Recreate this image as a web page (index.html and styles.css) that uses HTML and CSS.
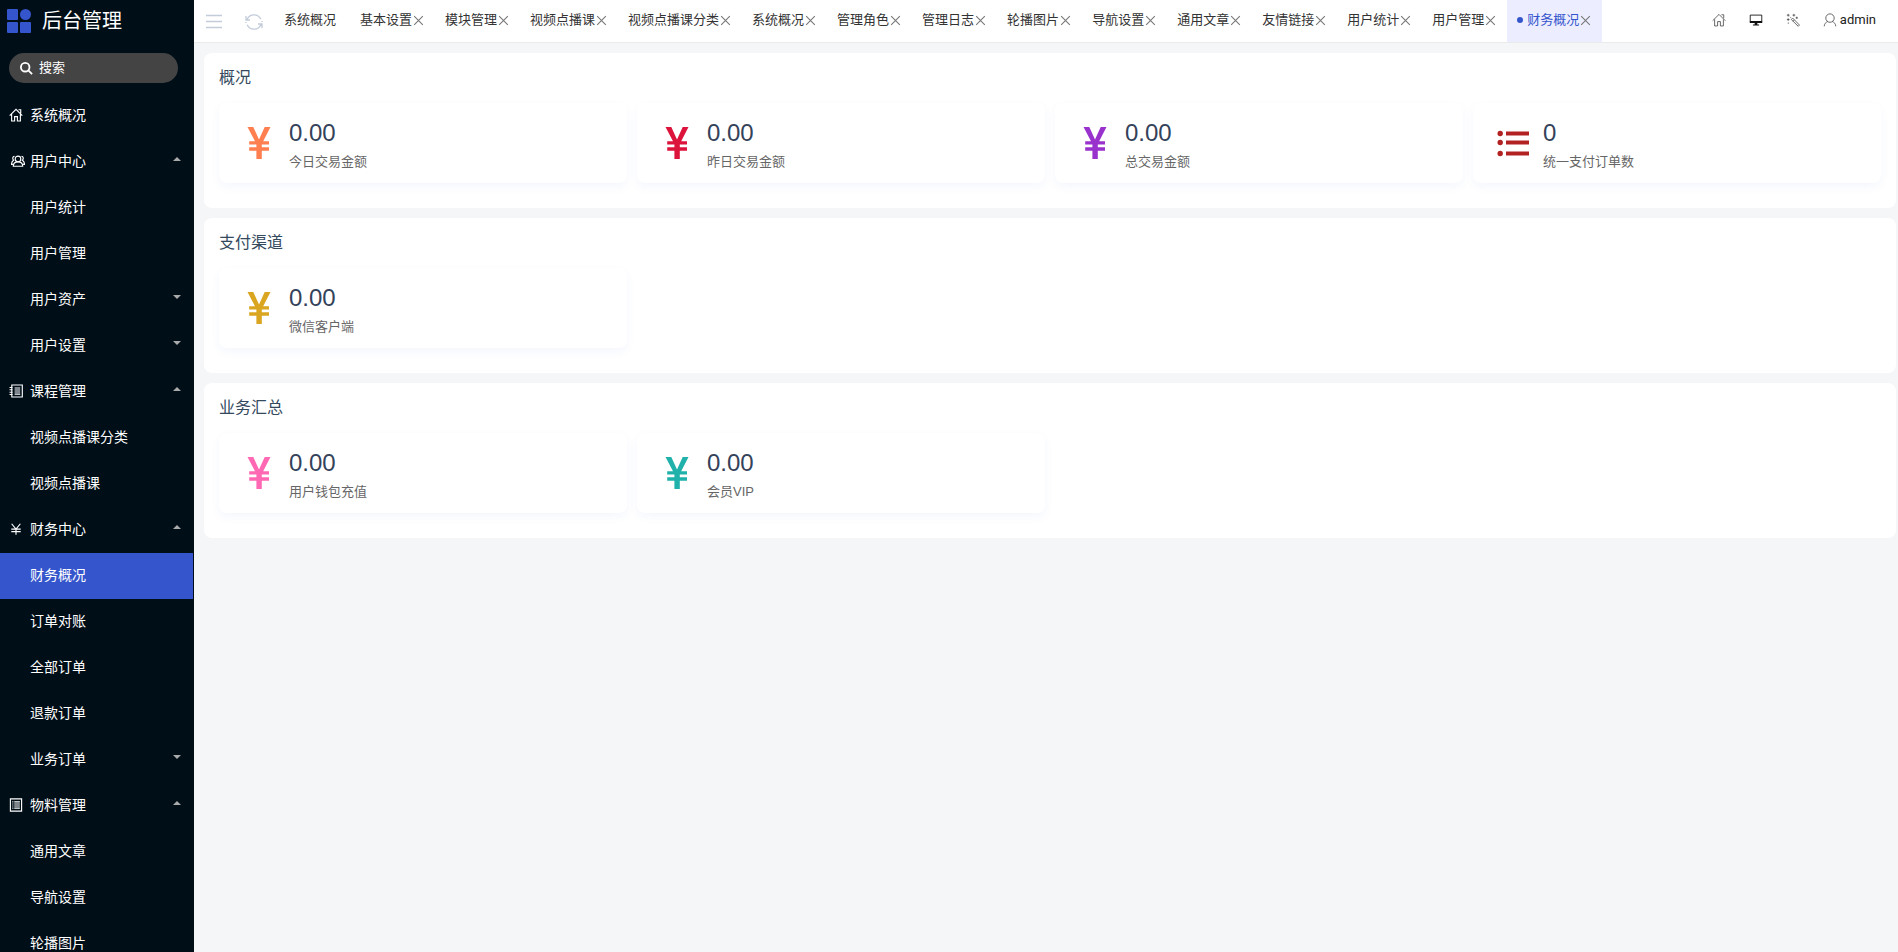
FILE: index.html
```html
<!DOCTYPE html>
<html lang="zh-CN">
<head>
<meta charset="utf-8">
<title>后台管理</title>
<link rel="stylesheet" href="styles.css">
</head>
<body>
<svg class="sprite" aria-hidden="true">
  <symbol id="i-home" viewBox="0 0 16 16"><path d="M.8 8.800 8 1.600l7.200 7.200M3 7.200v7.600h3.400V9.800h3.200v5H13V7.200M10.800 2h2.600v4"/></symbol>
  <symbol id="i-users" viewBox="0 0 16 16"><circle cx="8" cy="5.6" r="3.2"/><path d="M2.6 14c0-3 2-5 5.4-5s5.400 2 5.400 5zM4 2.800C2 2.600 1.200 5.200 3 7.200 1.600 8 .6 9.400.6 11.800h1.600M12 2.800c2-.2 2.800 2.400 1 4.400 1.400.8 2.400 2.200 2.400 4.600h-1.600"/></symbol>
  <symbol id="i-book" viewBox="0 0 16 16"><path d="M3.200 1.200h12v13.600h-12zM.6 4h3.600M.6 6.600h3.600M.6 9.400h3.600M.6 12h3.600M6.400 4.600h6.400M6.400 6.900h6.400M6.400 9.200h6.400M6.400 11.500h6.400"/></symbol>
  <symbol id="i-yen" viewBox="0 0 16 16"><path d="M3 2l5 6 5-6M8 8v6.600M2.600 8.200h10.800M2.600 11h10.800"/></symbol>
  <symbol id="i-list" viewBox="0 0 16 16"><path d="M1.600 1h12.800v14H1.600zM6 4.400h6.400M6 6.800h6.400M6 9.200h6.400M6 11.600h6.400M3.800 4.400H5M3.800 6.800H5M3.800 9.200H5M3.800 11.600H5"/></symbol>
  <symbol id="i-close" viewBox="0 0 12 12"><path d="M2 2l8 8M10 2l-8 8"/></symbol>
  <symbol id="b-yen" viewBox="0 0 32 32"><path class="solid" d="M4.500 0h5.800L16 12.500 21.700 0h5.800L20.200 14.200H26v3.400h-7.200v2.600H26v3.600h-7.200V32h-5.400v-8.200H6.200v-3.600h7.200v-2.600H6.200v-3.400H12z"/></symbol>
  <symbol id="b-list" viewBox="0 0 32 32"><path class="solid" d="M9 4.500h23v4H9zM9 13.500h23v4H9zM9 24.500h23v4H9z"/><circle class="solid" cx="3.200" cy="6.500" r="2.700"/><circle class="solid" cx="3.200" cy="15.500" r="2.700"/><circle class="solid" cx="3.200" cy="26.500" r="2.700"/></symbol>
</svg>
<div class="app">
  <aside class="sidebar">
    <div class="brand">
      <svg class="logo" viewBox="0 0 24 24"><rect width="11" height="11" rx="1"/><circle cx="18.500" cy="5.500" r="5.500"/><rect y="13" width="11" height="11" rx="1"/><rect x="13" y="13" width="11" height="11" rx="1"/></svg>
      <span>后台管理</span>
    </div>
    <label class="search">
      <svg class="search-icon" viewBox="0 0 14 14"><circle cx="5.600" cy="5.600" r="4.600"/><path d="M9 9l4 4"/></svg>
      <input type="text" placeholder="搜索" aria-label="搜索">
    </label>
    <nav class="menu">
      <a href="#"><svg class="icon"><use href="#i-home"/></svg>系统概况</a>
      <a href="#" class="up"><svg class="icon shift"><use href="#i-users"/></svg>用户中心</a>
      <a href="#">用户统计</a>
      <a href="#">用户管理</a>
      <a href="#" class="down">用户资产</a>
      <a href="#" class="down">用户设置</a>
      <a href="#" class="up"><svg class="icon"><use href="#i-book"/></svg>课程管理</a>
      <a href="#">视频点播课分类</a>
      <a href="#">视频点播课</a>
      <a href="#" class="up"><svg class="icon"><use href="#i-yen"/></svg>财务中心</a>
      <a href="#" class="active">财务概况</a>
      <a href="#">订单对账</a>
      <a href="#">全部订单</a>
      <a href="#">退款订单</a>
      <a href="#" class="down">业务订单</a>
      <a href="#" class="up"><svg class="icon"><use href="#i-list"/></svg>物料管理</a>
      <a href="#">通用文章</a>
      <a href="#">导航设置</a>
      <a href="#">轮播图片</a>
    </nav>
  </aside>
  <div class="main">
    <header class="topbar">
      <button class="tool" aria-label="折叠菜单"><svg viewBox="0 0 18 18"><path d="M1 2.500h16M1 8.500h16M1 14.500h16"/></svg></button>
      <button class="tool" aria-label="刷新"><svg viewBox="0 0 18 18"><path d="M2 6.500A7.500 7.500 0 0 1 15.800 6.200M16 11.500A7.500 7.500 0 0 1 2.200 11.800M1 3v4h4M17 15v-4h-4M1 9v1M17 9V8"/></svg></button>
      <nav class="tabs">
        <div class="tab first"><a href="#">系统概况</a></div>
        <div class="tab"><a href="#">基本设置</a><button aria-label="关闭"><svg><use href="#i-close"/></svg></button></div>
        <div class="tab"><a href="#">模块管理</a><button aria-label="关闭"><svg><use href="#i-close"/></svg></button></div>
        <div class="tab"><a href="#">视频点播课</a><button aria-label="关闭"><svg><use href="#i-close"/></svg></button></div>
        <div class="tab"><a href="#">视频点播课分类</a><button aria-label="关闭"><svg><use href="#i-close"/></svg></button></div>
        <div class="tab"><a href="#">系统概况</a><button aria-label="关闭"><svg><use href="#i-close"/></svg></button></div>
        <div class="tab"><a href="#">管理角色</a><button aria-label="关闭"><svg><use href="#i-close"/></svg></button></div>
        <div class="tab"><a href="#">管理日志</a><button aria-label="关闭"><svg><use href="#i-close"/></svg></button></div>
        <div class="tab"><a href="#">轮播图片</a><button aria-label="关闭"><svg><use href="#i-close"/></svg></button></div>
        <div class="tab"><a href="#">导航设置</a><button aria-label="关闭"><svg><use href="#i-close"/></svg></button></div>
        <div class="tab"><a href="#">通用文章</a><button aria-label="关闭"><svg><use href="#i-close"/></svg></button></div>
        <div class="tab"><a href="#">友情链接</a><button aria-label="关闭"><svg><use href="#i-close"/></svg></button></div>
        <div class="tab"><a href="#">用户统计</a><button aria-label="关闭"><svg><use href="#i-close"/></svg></button></div>
        <div class="tab"><a href="#">用户管理</a><button aria-label="关闭"><svg><use href="#i-close"/></svg></button></div>
        <div class="tab current"><a href="#">财务概况</a><button aria-label="关闭"><svg><use href="#i-close"/></svg></button></div>
      </nav>
      <div class="actions">
        <button aria-label="首页"><svg><use href="#i-home"/></svg></button>
        <button aria-label="全屏"><svg class="dark" viewBox="0 0 16 16"><path d="M1.400 2.400h13.200v8.400H1.400z"/><path class="solid" d="M1 9h14v2.400H1zM6.500 11h3v2h-3zM4.500 13h7v1.400h-7z"/></svg></button>
        <button aria-label="主题"><svg viewBox="0 0 16 16"><path d="M6 7.400 7.600 5.800l7.800 8-1.400 1.400zM8 9.400l1.600-1.600M1 2.500h3M2.500 1v3M7.500 2.500h3M9 1v3M1 7.500h3M2.500 6v3M4.600 4.400l1 1M11 5.500h2.600M12.300 4.200v2.600M2 11.500h1.500"/></svg></button>
        <button><svg viewBox="0 0 16 16"><circle cx="8" cy="5.800" r="4.800"/><path d="M1.400 15.200c.2-2.800 1.600-4.600 4-5.400M14.600 15.200c-.2-2.800-1.600-4.600-4-5.400"/></svg>admin</button>
      </div>
    </header>
    <main class="content">
      <section class="panel">
        <h2>概况</h2>
        <div class="grid">
          <div class="stat"><svg class="coral"><use href="#b-yen"/></svg><div><strong>0.00</strong><span>今日交易金额</span></div></div>
          <div class="stat"><svg class="crimson"><use href="#b-yen"/></svg><div><strong>0.00</strong><span>昨日交易金额</span></div></div>
          <div class="stat"><svg class="orchid"><use href="#b-yen"/></svg><div><strong>0.00</strong><span>总交易金额</span></div></div>
          <div class="stat"><svg class="brick"><use href="#b-list"/></svg><div><strong>0</strong><span>统一支付订单数</span></div></div>
        </div>
      </section>
      <section class="panel">
        <h2>支付渠道</h2>
        <div class="grid">
          <div class="stat"><svg class="gold"><use href="#b-yen"/></svg><div><strong>0.00</strong><span>微信客户端</span></div></div>
        </div>
      </section>
      <section class="panel">
        <h2>业务汇总</h2>
        <div class="grid">
          <div class="stat"><svg class="pink"><use href="#b-yen"/></svg><div><strong>0.00</strong><span>用户钱包充值</span></div></div>
          <div class="stat"><svg class="teal"><use href="#b-yen"/></svg><div><strong>0.00</strong><span>会员VIP</span></div></div>
        </div>
      </section>
    </main>
  </div>
</div>
</body>
</html>
```
FILE: styles.css
```css
* { box-sizing: border-box; }
body {
  margin: 0;
  font: 13px/20px "Liberation Sans", "Noto Sans CJK SC", sans-serif;
  color: #333;
  background: #f5f6f8;
}
a { color: inherit; text-decoration: none; }
button { border: 0; padding: 0; background: none; font: inherit; color: inherit; cursor: pointer; }
svg { fill: none; stroke: currentColor; flex: none; }
.solid { fill: currentColor; stroke: none; }
.sprite { display: none; }
.app { display: flex; height: 100vh; overflow: hidden; }

.sidebar { width: 194px; flex: none; background: #000e18; color: #fff; overflow: hidden; }
.brand { display: flex; align-items: center; gap: 11px; height: 42px; padding-left: 7px; font-size: 20px; }
.logo { width: 24px; height: 24px; fill: #3555cc; stroke: none; }
.search {
  display: flex; align-items: center; gap: 6px;
  height: 30px; margin: 11px 16px 10px 9px; padding: 0 11px;
  border-radius: 15px; background: #444;
}
.search-icon { width: 13px; height: 13px; stroke-width: 2; }
.search input { flex: 1; min-width: 0; border: 0; padding: 0; outline: 0; background: none; color: #fff; font: inherit; }
.search input::placeholder { color: #fff; opacity: 1; }
.menu { margin-right: 1px; font-size: 14px; }
.menu a { position: relative; display: flex; align-items: center; height: 46px; padding: 0 0 2px 30px; }
.menu .active { background: #3555cc; }
.icon { position: absolute; left: 9px; width: 14px; height: 14px; stroke-width: 1.300; }
.icon.shift { left: 11px; }
.up::after, .down::after {
  content: ""; position: absolute; right: 12px; top: 18px;
  border: 4px solid transparent; border-top-width: 0; border-bottom-color: #aaa;
}
.down::after { border-top: 4px solid #aaa; border-bottom: 0; }

.main { flex: 1; min-width: 0; display: flex; flex-direction: column; }
.topbar { display: flex; height: 43px; background: #fff; border-bottom: 1px solid #eaebed; }
.tool { width: 40px; color: #c3ccda; }
.tool svg { width: 18px; height: 18px; vertical-align: middle; stroke-width: 1.300; }
.tabs { display: flex; flex: 1; min-width: 0; margin-left: -4px; overflow: hidden; }
.tab { display: flex; align-items: center; flex: none; padding: 0 10px 2px; }
.tab.first { min-width: 80px; justify-content: center; }
.tab button { display: flex; width: 13px; color: #777; }
.tab svg { width: 13px; height: 13px; }
.current { background: #eceeff; color: #3555cc; }
.current::before { content: ""; width: 6px; height: 6px; margin-right: 4px; border-radius: 50%; background: #3555cc; }
.actions { display: flex; align-items: center; gap: 23px; padding: 0 22px 2px 0; font-family: Roboto, sans-serif; }
.actions button { display: flex; align-items: center; gap: 3px; color: #222; }
.actions svg { width: 14px; height: 14px; color: #555; }
.actions .dark { color: #111; }

.content { padding: 10px 2px 10px 10px; display: flex; flex-direction: column; gap: 10px; }
.panel { padding: 15px 15px 25px; border-radius: 8px; background: #fff; }
.panel h2 { margin: 0 0 15px; font-size: 16px; line-height: 20px; font-weight: 400; color: #34495e; }
.grid { display: grid; grid-template-columns: repeat(4, 1fr); gap: 10px; }
.stat {
  display: flex; align-items: center; gap: 14px; height: 80px; padding: 0 24px;
  border-radius: 8px; box-shadow: 0 4px 10px rgba(60, 90, 220, .05);
}
.stat svg { width: 32px; height: 32px; }
.stat div { display: flex; flex-direction: column; gap: 5px; padding-top: 5px; }
.stat strong { font-size: 24px; line-height: 28px; font-weight: 400; color: #34425a; }
.stat span { color: #666; line-height: 20px; }
.coral { color: coral; }
.crimson { color: crimson; }
.orchid { color: darkorchid; }
.brick { color: firebrick; }
.gold { color: goldenrod; }
.pink { color: hotpink; }
.teal { color: lightseagreen; }
```
